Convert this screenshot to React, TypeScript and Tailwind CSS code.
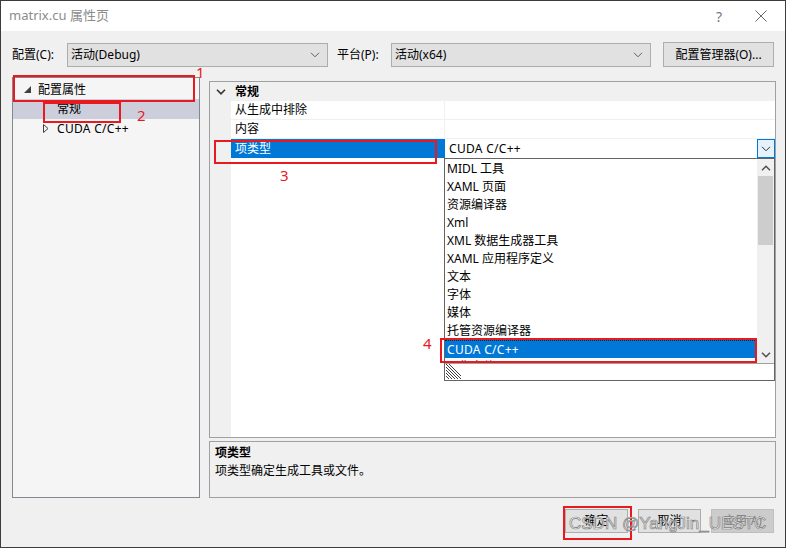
import React from 'react';

const font = "font-['Noto_Sans','Noto_Sans_CJK_SC',sans-serif]";

const Chevron = ({ className = '', color = '#606060', w = 1 }: { className?: string; color?: string; w?: number }) => (
  <svg width="10" height="6" viewBox="0 0 10 6" className={className}>
    <path d="M1 0.8 L5 4.8 L9 0.8" fill="none" stroke={color} strokeWidth={w} />
  </svg>
);

const Combo = ({ value, width }: { value: string; width: string }) => (
  <div className={`${width} h-[24px] bg-[#e1e1e1] border border-[#adadad] flex items-center pl-[3px] pr-[7px] text-[12px] text-black`}>
    <span className="flex-1">{value}</span>
    <Chevron />
  </div>
);

const RedBox = ({ className }: { className: string }) => (
  <div className={`absolute border-2 border-[#e8191f] pointer-events-none ${className}`} />
);

const Mark = ({ n, className }: { n: string; className: string }) => (
  <span className={`absolute text-[15px] leading-none text-[#e8191f] ${className}`}>{n}</span>
);

const listItems = [
  'MIDL 工具',
  'XAML 页面',
  '资源编译器',
  'Xml',
  'XML 数据生成器工具',
  'XAML 应用程序定义',
  '文本',
  '字体',
  '媒体',
  '托管资源编译器',
];

const App = () => {
  return (
    <div className={`relative w-[786px] h-[548px] overflow-hidden border border-[#3c3c3c] bg-[#f0f0f0] ${font} text-[12px] text-black`}>
      {/* title bar */}
      <div className="h-[30px] bg-white flex items-center pl-[8px] text-[13px] text-[#8c8c8c]">
        <span className="flex-1">matrix.cu 属性页</span>
        <span className="w-[20px] text-center text-[14px] text-[#777] mr-[26px]">?</span>
        <svg width="12" height="12" viewBox="0 0 12 12" className="mr-[18px]">
          <path d="M0.5 0.5 L11.5 11.5 M11.5 0.5 L0.5 11.5" stroke="#666" strokeWidth="1" />
        </svg>
      </div>

      {/* config row */}
      <div className="flex items-center mt-[11px] pl-[11px] h-[25px]">
        <span className="w-[55px]">配置(C):</span>
        <Combo value="活动(Debug)" width="w-[261px]" />
        <span className="ml-[9px] w-[54px]">平台(P):</span>
        <Combo value="活动(x64)" width="w-[260px]" />
        <div className="ml-[12px] w-[111px] h-[25px] bg-[#e1e1e1] border border-[#adadad] flex items-center justify-center">
          配置管理器(O)...
        </div>
      </div>

      {/* main */}
      <div className="flex mt-[10px] pl-[11px]">
        {/* tree */}
        <div className="w-[188px] h-[421px] border border-[#828790] bg-[#f5f5f5] pt-[2px]">
          <div className="h-[19px] flex items-center pl-[11px]">
            <svg width="7" height="7" viewBox="0 0 7 7">
              <polygon points="0,7 7,7 7,0" fill="#404040" />
            </svg>
            <span className="ml-[7px]">配置属性</span>
          </div>
          <div className="h-[20px] bg-[#cccedb] flex items-center pl-[44px]">常规</div>
          <div className="h-[19px] flex items-center pl-[30px]">
            <svg width="6" height="9" viewBox="0 0 6 9">
              <polygon points="0.5,0.5 5,4.5 0.5,8.5" fill="none" stroke="#404040" strokeWidth="1" />
            </svg>
            <span className="ml-[8px] tracking-[0.3px]">CUDA C/C++</span>
          </div>
        </div>

        {/* right side */}
        <div className="ml-[9px] mt-[4px] flex flex-col">
          <div className="relative w-[567px] h-[357px] border border-[#a0a0a0] bg-white flex">
            <div className="w-[21px] bg-[#f0f0f0] flex justify-center pt-[7px]">
              <Chevron color="#333" w={1.6} />
            </div>
            <div className="flex-1 flex flex-col">
              <div className="h-[19px] bg-[#f0f0f0] flex items-center pl-[4px] font-bold">常规</div>
              <div className="h-[19px] flex border-b border-[#f0f0f0]">
                <div className="w-[214px] pl-[4px] flex items-center border-r border-[#f0f0f0]">从生成中排除</div>
                <div className="flex-1" />
              </div>
              <div className="h-[19px] flex border-b border-[#f0f0f0]">
                <div className="w-[214px] pl-[4px] flex items-center border-r border-[#f0f0f0]">内容</div>
                <div className="flex-1" />
              </div>
              <div className="h-[19px] flex">
                <div className="w-[214px] pl-[4px] flex items-center bg-[#0078d7] text-white">项类型</div>
                <div className="flex-1 flex items-center pl-[4px] tracking-[0.3px]">
                  <span className="flex-1">CUDA C/C++</span>
                  <div className="w-[18px] h-[19px] border border-[#0078d7] bg-[#e5f1fb] flex items-center justify-center">
                    <Chevron color="#333" />
                  </div>
                </div>
              </div>
            </div>

            {/* dropdown list */}
            <div className="absolute left-[234px] top-[76px] w-[331px] h-[223px] border border-[#646464] bg-white flex flex-col">
              <div className="h-[204px] flex overflow-hidden">
                <div className="flex-1 flex flex-col pt-[1px] overflow-hidden">
                  {listItems.map((t) => (
                    <div key={t} className="h-[18px] shrink-0 flex items-center pl-[2px]">
                      {t}
                    </div>
                  ))}
                  <div className="h-[18px] shrink-0 flex items-center pl-[2px] bg-[#0078d7] text-white border-t border-dotted border-[#222] tracking-[0.3px]">
                    CUDA C/C++
                  </div>
                  <div className="h-[18px] shrink-0 flex items-center pl-[2px] text-[#333]">图像文件 (Windows)</div>
                </div>
                <div className="w-[17px] bg-[#f0f0f0] flex flex-col">
                  <div className="h-[17px] flex items-center justify-center">
                    <Chevron className="rotate-180" color="#505050" w={1.5} />
                  </div>
                  <div className="h-[69px] mx-[1px] bg-[#cdcdcd]" />
                  <div className="flex-1" />
                  <div className="h-[17px] flex items-center justify-center">
                    <Chevron color="#505050" w={1.5} />
                  </div>
                </div>
              </div>
              <div className="flex-1 border-t border-[#a0a0a0] flex items-end pl-[1px] pb-[1px]">
                <svg width="15" height="15" viewBox="0 0 15 15">
                  <path d="M0 3 L12 15 M0 6 L9 15 M0 9 L6 15 M0 12 L3 15 M3 0 L15 12" stroke="#404040" strokeWidth="1" />
                  <path d="M0 0 L15 15" stroke="#404040" strokeWidth="1" />
                </svg>
              </div>
            </div>
          </div>

          {/* description */}
          <div className="mt-[3px] w-[567px] h-[57px] border border-[#a0a0a0] bg-[#f0f0f0] pl-[5px] pt-[2px]">
            <div className="font-bold leading-[18px]">项类型</div>
            <div className="leading-[18px]">项类型确定生成工具或文件。</div>
          </div>
        </div>
      </div>

      {/* buttons */}
      <div className="flex justify-end gap-[10px] mt-[11px] pr-[11px]">
        <div className="w-[63px] h-[24px] bg-[#e1e1e1] border border-[#adadad] flex items-center justify-center">确定</div>
        <div className="w-[63px] h-[24px] bg-[#e1e1e1] border border-[#adadad] flex items-center justify-center">取消</div>
        <div className="w-[63px] h-[24px] bg-[#cccccc] border border-[#bfbfbf] flex items-center justify-center text-[#838383]">应用(A)</div>
      </div>

      {/* annotations */}
      <RedBox className="left-[12px] top-[74px] w-[182px] h-[27px]" />
      <Mark n="1" className="left-[195px] top-[64px]" />
      <RedBox className="left-[42px] top-[101px] w-[78px] h-[21px]" />
      <Mark n="2" className="left-[136px] top-[107px]" />
      <RedBox className="left-[213px] top-[139px] w-[223px] h-[24px]" />
      <Mark n="3" className="left-[279px] top-[167px]" />
      <RedBox className="left-[439px] top-[337px] w-[317px] h-[25px]" />
      <Mark n="4" className="left-[422px] top-[335px]" />
      <RedBox className="left-[562px] top-[505px] w-[69px] h-[34px]" />

      {/* watermark */}
      <span className="absolute left-[568px] top-[513px] whitespace-nowrap text-[17px] leading-[20px] font-['Liberation_Sans',sans-serif] text-white/80 [-webkit-text-stroke:0.7px_#808080]">
        CSDN @YangJin_UESTC
      </span>
    </div>
  );
};

export default App;
